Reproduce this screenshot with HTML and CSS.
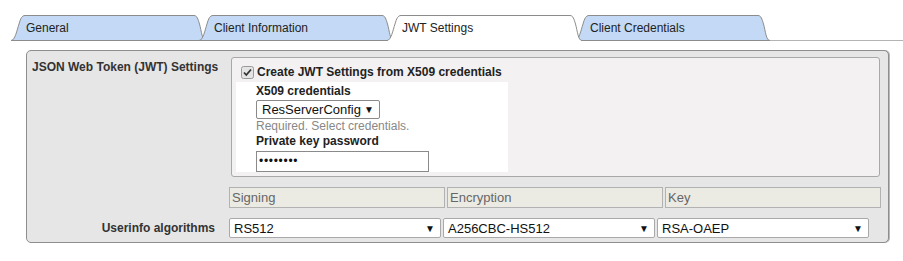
FILE: index.html
```html
<!DOCTYPE html>
<html>
    <head>
        <link rel="stylesheet" href="styles.css">
    </head>
    <body>
        <div class="tabs">
            <div class="tab">
                <svg class="tab-shape" viewBox="0 0 195 26"><path d="M0 25.5 C4 25.5 6 15 8 9 C9.5 3.5 11 0.5 14 0.5 L183 0.5 C186 0.5 187 4 188.5 9 C190.5 16 191 25.5 195 25.5 Z"/></svg>
                <span class="tab-label">General</span>
            </div>
            <div class="tab">
                <svg class="tab-shape" viewBox="0 0 195 26"><path d="M0 25.5 C4 25.5 6 15 8 9 C9.5 3.5 11 0.5 14 0.5 L183 0.5 C186 0.5 187 4 188.5 9 C190.5 16 191 25.5 195 25.5 Z"/></svg>
                <span class="tab-label">Client Information</span>
            </div>
            <div class="tab tab-active">
                <svg class="tab-shape" viewBox="0 0 195 26"><path d="M0 26 L0 25.5 C4 25.5 6 15 8 9 C9.5 3.5 11 0.5 14 0.5 L183 0.5 C186 0.5 187 4 188.5 9 C190.5 16 191 25.5 195 25.5 L195 26"/></svg>
                <span class="tab-label">JWT Settings</span>
            </div>
            <div class="tab">
                <svg class="tab-shape" viewBox="0 0 195 26"><path d="M0 25.5 C4 25.5 6 15 8 9 C9.5 3.5 11 0.5 14 0.5 L183 0.5 C186 0.5 187 4 188.5 9 C190.5 16 191 25.5 195 25.5 Z"/></svg>
                <span class="tab-label">Client Credentials</span>
            </div>
            <div class="tab-rest"></div>
        </div>

        <div class="panel">
            <div class="row">
                <div class="row-label">JSON Web Token (JWT) Settings</div>
                <div class="fieldset">
                    <div class="check-line">
                        <svg class="check" viewBox="0 0 13 13"><rect x="0.5" y="0.5" width="12" height="12" rx="2"/><path d="M3 6.5 L5.3 9 L10 3.5"/></svg>
                        <span>Create JWT Settings from X509 credentials</span>
                    </div>
                    <div class="cred-box">
                        <div class="field-label">X509 credentials</div>
                        <div class="select select-inline">
                            <span>ResServerConfig</span>
                            <span class="arrow">&#9660;</span>
                        </div>
                        <div class="hint">Required. Select credentials.</div>
                        <div class="field-label">Private key password</div>
                        <div class="input">&bull;&bull;&bull;&bull;&bull;&bull;&bull;&bull;</div>
                    </div>
                </div>
            </div>

            <div class="row row-heads">
                <div class="row-label"></div>
                <div class="heads">
                    <div class="head">Signing</div>
                    <div class="head">Encryption</div>
                    <div class="head">Key</div>
                </div>
            </div>

            <div class="row row-algos">
                <div class="row-label row-label-right">Userinfo algorithms</div>
                <div class="algos">
                    <div class="select"><span>RS512</span><span class="arrow">&#9660;</span></div>
                    <div class="select"><span>A256CBC-HS512</span><span class="arrow">&#9660;</span></div>
                    <div class="select"><span>RSA-OAEP</span><span class="arrow">&#9660;</span></div>
                </div>
            </div>
        </div>
    </body>
</html>
```

FILE: styles.css
```css
* {
    box-sizing: border-box;
    font-family: 'Liberation Sans', Arial, sans-serif;
}

body {
    margin: 0;
    background: #fff;
    color: #222;
    font-size: 12px;
}

/* tab strip */

.tabs {
    display: flex;
    flex-direction: row;
    padding: 15px 0 0 11px;
}

.tab {
    position: relative;
    width: 195px;
    height: 26px;
    flex: none;
}

.tab + .tab {
    margin-left: -7px;
}

.tab-shape {
    position: absolute;
    left: 0;
    top: 0;
    width: 195px;
    height: 26px;
}

.tab-shape path {
    fill: #c3d9f5;
    stroke: #8c8c8c;
    stroke-width: 1;
}

.tab-active {
    z-index: 2;
}

.tab-active .tab-shape path {
    fill: #fff;
}

.tab-label {
    position: relative;
    display: block;
    padding: 1px 0 0 15px;
    line-height: 25px;
    color: #222;
}

.tab-rest {
    flex: 1;
    height: 26px;
    border-bottom: 1px solid #b4b4b4;
}

/* settings panel */

.panel {
    margin: 9px 0 0 26px;
    width: 863px;
    padding: 6px 0 4px 0;
    background: #e6e6e6;
    border: 1px solid #8e8e8e;
    border-radius: 5px;
    box-shadow: 1px 0 0 #b8b8b8;
}

.row {
    display: flex;
    flex-direction: row;
}

.row-label {
    width: 202px;
    flex: none;
    padding: 3px 0 0 5px;
    font-weight: bold;
    line-height: 15px;
    color: #333;
}

.row-label-right {
    padding: 0 14px 0 0;
    text-align: right;
    line-height: 20px;
}

.fieldset {
    width: 649px;
    height: 120px;
    margin-left: 2px;
    padding: 6px 0 0 9px;
    background: #f3f1f1;
    border: 1px solid #a8a8a8;
    border-radius: 3px;
}

.check-line {
    display: flex;
    flex-direction: row;
    align-items: center;
    height: 16px;
    font-weight: bold;
    color: #222;
}

.check {
    width: 13px;
    height: 13px;
    margin-right: 3px;
}

.check rect {
    fill: #e4e4e4;
    stroke: #9a9a9a;
}

.check path {
    fill: none;
    stroke: #333;
    stroke-width: 1.8;
}

.cred-box {
    width: 272px;
    height: 90px;
    margin: 2px 0 0 -5px;
    padding: 2px 0 0 20px;
    background: #fff;
}

.field-label {
    font-weight: bold;
    line-height: 15px;
    color: #222;
}

.hint {
    line-height: 15px;
    color: #888;
}

.select {
    display: flex;
    flex-direction: row;
    justify-content: space-between;
    align-items: center;
    height: 20px;
    padding: 0 5px 0 4px;
    background: #fff;
    border: 1px solid #a9a9a9;
    border-radius: 2px;
    font-size: 13px;
    color: #111;
}

.select-inline {
    display: inline-flex;
    height: 19px;
    margin-top: 1px;
    padding: 0 5px 0 5px;
    border-color: #8a8a8a;
    vertical-align: top;
}

.select-inline .arrow {
    margin-left: 3px;
}

.arrow {
    font-size: 10px;
    color: #111;
}

.input {
    width: 173px;
    height: 21px;
    margin-top: 2px;
    padding-left: 2px;
    border: 1px solid #8a8a8a;
    font-size: 12px;
    line-height: 19px;
    letter-spacing: 0.7px;
    color: #111;
}

/* algorithm grid */

.row-heads {
    margin-top: 10px;
}

.heads, .algos {
    display: flex;
    flex-direction: row;
    gap: 2px;
}

.head {
    width: 216px;
    height: 21px;
    padding-left: 2px;
    background: #ebeae3;
    border: 1px solid #b2b2b2;
    font-size: 13px;
    line-height: 19px;
    color: #666;
}

.row-algos {
    margin-top: 10px;
}

.algos .select {
    width: 212px;
}
```
